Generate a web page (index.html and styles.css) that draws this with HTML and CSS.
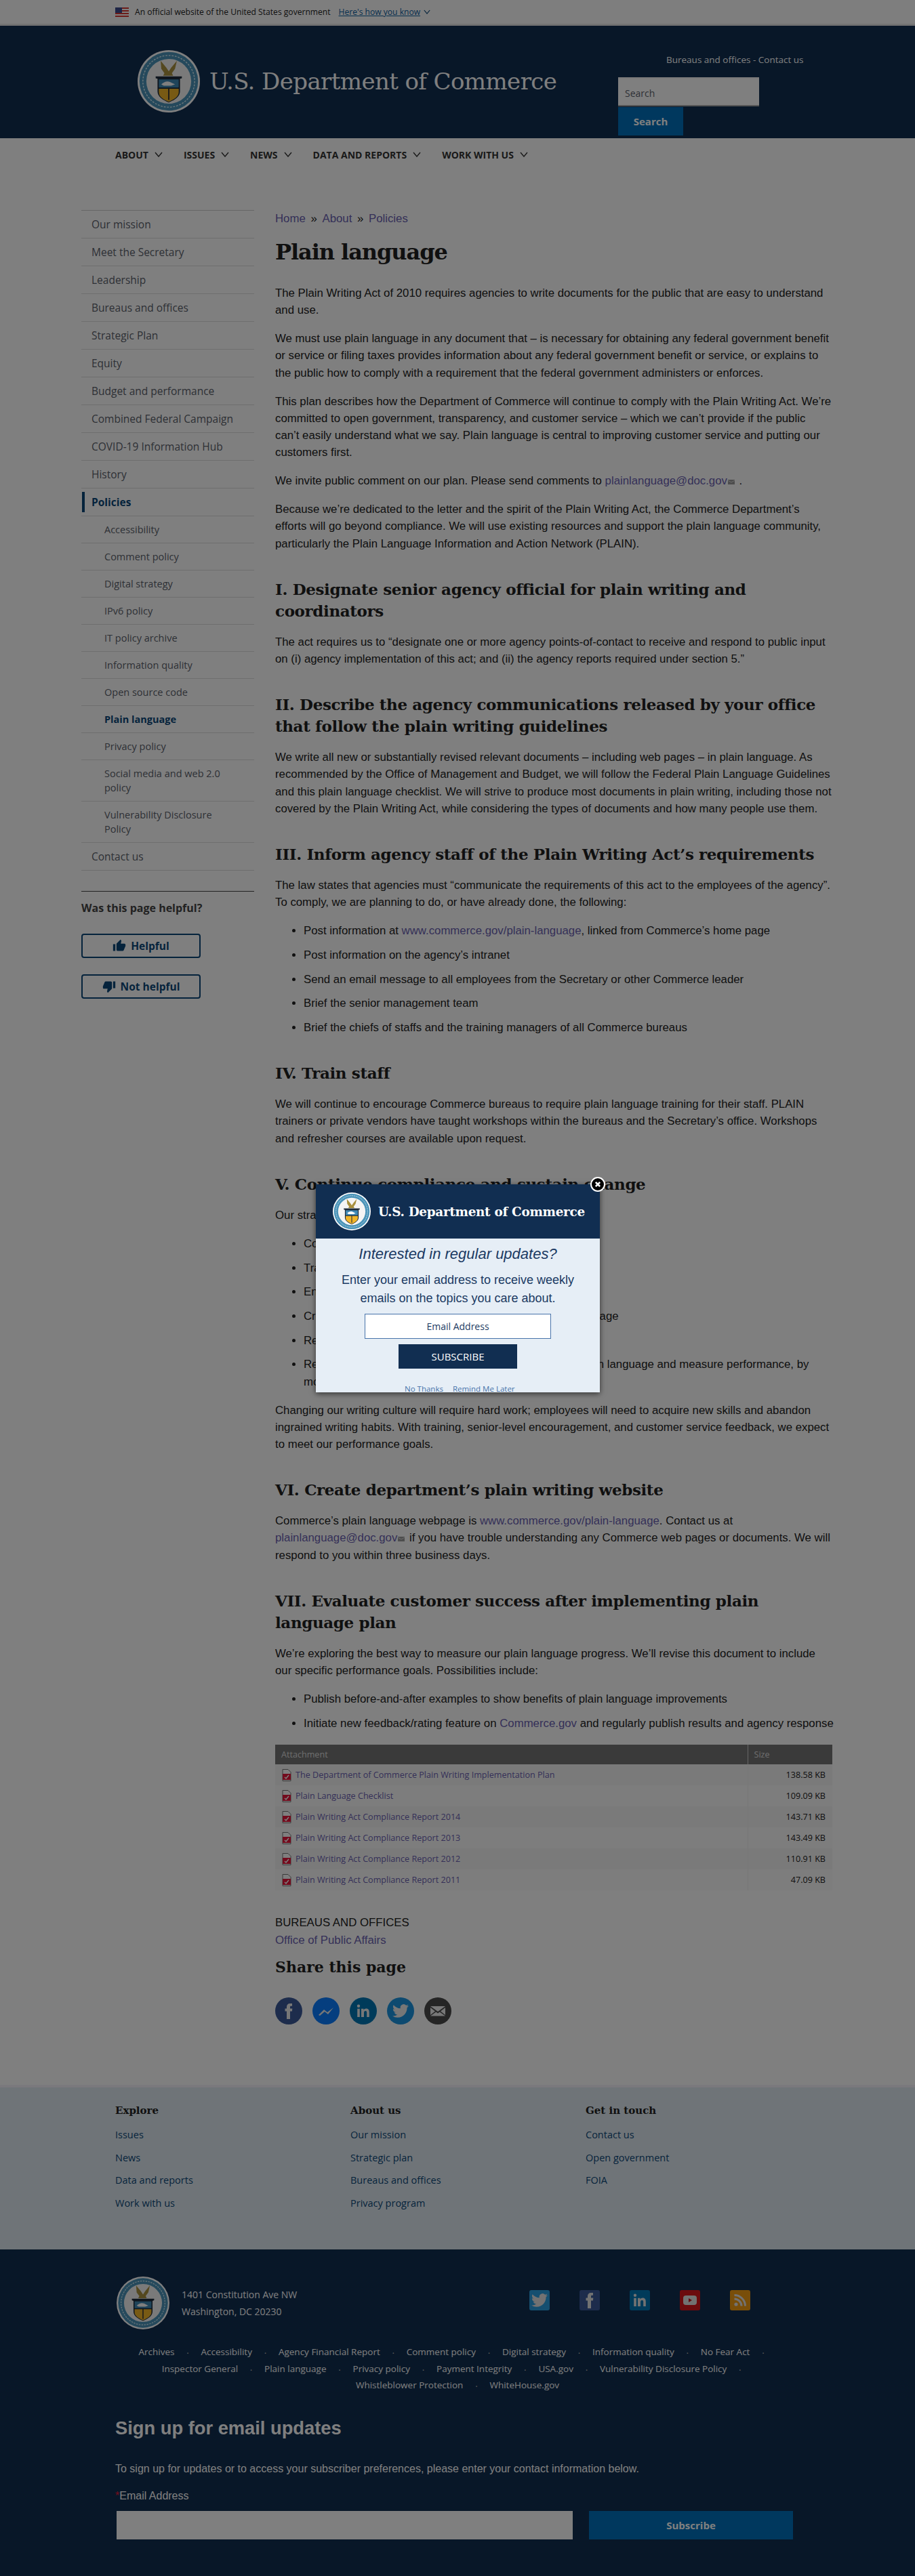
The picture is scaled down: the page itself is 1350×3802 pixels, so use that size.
FILE: index.html
```html
<!DOCTYPE html>
<html>
<head>
	<title>Plain language | U.S. Department of Commerce</title>
	<link rel="stylesheet" href="styles.css">
</head>
<body>
	<svg class="defs" width="0" height="0">
		<symbol id="seal" viewBox="0 0 100 100">
			<circle cx="50" cy="50" r="50" fill="#fff"/>
			<circle cx="50" cy="50" r="47" fill="#4a93b8"/>
			<circle cx="50" cy="50" r="36" fill="#f4f4f4"/>
			<circle cx="50" cy="50" r="41.5" fill="none" stroke="#d9edf5" stroke-width="1.5" stroke-dasharray="3 2"/>
			<path d="M37 17l9 11 4 6 4-6 9-11-3 13-5 7 2 4H41l2-4-5-7z" fill="#a8903f"/>
			<path d="M29 42h42v3l-3 1v20c0 9-9 14-18 18-9-4-18-9-18-18V46l-3-1z" fill="#1d2a3a"/>
			<path d="M34 47h32v13H34z" fill="#3f88b5"/>
			<path d="M38 55c4-4 9-6 14-4l8 4-6 2H42z" fill="#fff"/>
			<path d="M34 62h32v5c0 8-8 12-16 16-8-4-16-8-16-16z" fill="#f0b429"/>
			<path d="M49 60h2v20h-2z" fill="#333"/>
		</symbol>
		<symbol id="chevron" viewBox="0 0 12 8">
			<path d="M1 1l5 6 5-6" fill="none" stroke="currentColor" stroke-width="1.4"/>
		</symbol>
		<symbol id="pdf" viewBox="0 0 14 18">
			<path d="M1 .5h8l4 4v13H1z" fill="#fff" stroke="#777"/>
			<path d="M1 7h12v9H1z" fill="#e6163a"/>
			<path d="M4 12l2 2 4-5" fill="none" stroke="#fff" stroke-width="1.5"/>
		</symbol>
		<symbol id="bird" viewBox="0 0 24 24">
			<path d="M23.95 4.57a10 10 0 0 1-2.82.77 4.96 4.96 0 0 0 2.16-2.72c-.95.55-2 .95-3.12 1.17a4.92 4.92 0 0 0-8.38 4.48C7.69 8.09 4.07 6.13 1.64 3.16a4.82 4.82 0 0 0-.67 2.48c0 1.7.87 3.2 2.19 4.1a4.9 4.9 0 0 1-2.23-.62v.06a4.92 4.92 0 0 0 3.95 4.83 4.9 4.9 0 0 1-2.21.08 4.94 4.94 0 0 0 4.6 3.42A9.87 9.87 0 0 1 0 19.54a13.94 13.94 0 0 0 7.55 2.21c9.05 0 14-7.5 14-13.98 0-.21 0-.42-.02-.63a9.94 9.94 0 0 0 2.46-2.55z" fill="currentColor"/>
		</symbol>
		<symbol id="fb" viewBox="0 0 24 24">
			<path d="M14 8.5V6.3c0-1 .3-1.5 1.6-1.5H17V1h-2.900C10.700 1 9 3 9 6v2.500H6.500v4H9V24h5V12.500h2.900l.4-4z" fill="currentColor"/>
		</symbol>
		<symbol id="in" viewBox="0 0 24 24">
			<path d="M5 2.500a2.200 2.200 0 1 1 0 4.400 2.200 2.200 0 0 1 0-4.400zM3.200 8.800h3.600V21H3.200zM9 8.800h3.400v1.700c.5-.9 1.800-2 3.700-2 3.900 0 4.700 2.600 4.700 5.900V21h-3.600v-5.700c0-1.400 0-3.200-2-3.200s-2.200 1.500-2.200 3.100V21H9z" fill="currentColor"/>
		</symbol>
		<symbol id="thumb" viewBox="0 0 24 24">
			<path d="M1 21h4V9H1v12zm22-11c0-1.100-.9-2-2-2h-6.310l.95-4.570.03-.32c0-.41-.17-.79-.44-1.060L14.170 1 7.590 7.590C7.220 7.950 7 8.450 7 9v10c0 1.100.9 2 2 2h9c.83 0 1.540-.5 1.840-1.220l3.020-7.050c.09-.23.14-.47.14-.73v-2z" fill="currentColor"/>
		</symbol>
		<symbol id="mailmark" viewBox="0 0 10 7">
			<path d="M0 0h10v7H0z" fill="#9a9a9a"/>
			<path d="M0 1l5 3 5-3" fill="none" stroke="#dcdcdc"/>
		</symbol>
	</svg>

	<div class="gov-banner">
		<svg class="flag" viewBox="0 0 20 14" width="20" height="14">
			<path d="M0 0h20v14H0z" fill="#fff"/>
			<path d="M0 0h20v2H0zM0 4h20v2H0zM0 8h20v2H0zM0 12h20v2H0z" fill="#d83933"/>
			<path d="M0 0h10v8H0z" fill="#3c4a8c"/>
		</svg>
		<span>An official website of the United States government</span>
		<a href="#">Here's how you know</a>
		<svg class="chev"><use href="#chevron"/></svg>
	</div>

	<header class="site-header">
		<div class="brand">
			<svg class="brand-seal"><use href="#seal"/></svg>
			<span class="brand-name">U.S. Department of Commerce</span>
		</div>
		<div class="header-right">
			<div class="top-links">Bureaus and offices - Contact us</div>
			<div class="search-box">Search</div>
			<button class="search-btn">Search</button>
		</div>
	</header>

	<nav class="main-nav">
		<a href="#">About <svg><use href="#chevron"/></svg></a>
		<a href="#">Issues <svg><use href="#chevron"/></svg></a>
		<a href="#">News <svg><use href="#chevron"/></svg></a>
		<a href="#">Data and reports <svg><use href="#chevron"/></svg></a>
		<a href="#">Work with us <svg><use href="#chevron"/></svg></a>
	</nav>

	<div class="page">
		<aside class="sidebar">
			<ul class="side-menu">
				<li>Our mission</li>
				<li>Meet the Secretary</li>
				<li>Leadership</li>
				<li>Bureaus and offices</li>
				<li>Strategic Plan</li>
				<li>Equity</li>
				<li>Budget and performance</li>
				<li>Combined Federal Campaign</li>
				<li>COVID-19 Information Hub</li>
				<li>History</li>
				<li class="active">Policies</li>
				<li class="sub">Accessibility</li>
				<li class="sub">Comment policy</li>
				<li class="sub">Digital strategy</li>
				<li class="sub">IPv6 policy</li>
				<li class="sub">IT policy archive</li>
				<li class="sub">Information quality</li>
				<li class="sub">Open source code</li>
				<li class="sub current">Plain language</li>
				<li class="sub">Privacy policy</li>
				<li class="sub">Social media and web 2.0 policy</li>
				<li class="sub">Vulnerability Disclosure Policy</li>
				<li>Contact us</li>
			</ul>
			<div class="helpful">
				<h4>Was this page helpful?</h4>
				<button class="help-btn"><svg><use href="#thumb"/></svg>Helpful</button>
				<button class="help-btn down"><svg><use href="#thumb"/></svg>Not helpful</button>
			</div>
		</aside>

		<main class="content">
			<div class="crumbs"><a href="#">Home</a> » <a href="#">About</a> » <a href="#">Policies</a></div>
			<h1>Plain language</h1>

			<p>The Plain Writing Act of 2010 requires agencies to write documents for the public that are easy to understand and use.</p>
			<p>We must use plain language in any document that – is necessary for obtaining any federal government benefit or service or filing taxes provides information about any federal government benefit or service, or explains to the public how to comply with a requirement that the federal government administers or enforces.</p>
			<p>This plan describes how the Department of Commerce will continue to comply with the Plain Writing Act. We’re committed to open government, transparency, and customer service – which we can’t provide if the public can’t easily understand what we say. Plain language is central to improving customer service and putting our customers first.</p>
			<p>We invite public comment on our plan. Please send comments to <a href="#">plainlanguage@doc.gov</a><svg class="mailmark"><use href="#mailmark"/></svg> .</p>
			<p>Because we’re dedicated to the letter and the spirit of the Plain Writing Act, the Commerce Department’s efforts will go beyond compliance. We will use existing resources and support the plain language community, particularly the Plain Language Information and Action Network (PLAIN).</p>

			<h2>I. Designate senior agency official for plain writing and coordinators</h2>
			<p>The act requires us to “designate one or more agency points-of-contact to receive and respond to public input on (i) agency implementation of this act; and (ii) the agency reports required under section 5.”</p>

			<h2>II. Describe the agency communications released by your office that follow the plain writing guidelines</h2>
			<p>We write all new or substantially revised relevant documents – including web pages – in plain language. As recommended by the Office of Management and Budget, we will follow the Federal Plain Language Guidelines and this plain language checklist. We will strive to produce most documents in plain writing, including those not covered by the Plain Writing Act, while considering the types of documents and how many people use them.</p>

			<h2>III. Inform agency staff of the Plain Writing Act’s requirements</h2>
			<p>The law states that agencies must “communicate the requirements of this act to the employees of the agency”. To comply, we are planning to do, or have already done, the following:</p>
			<ul>
				<li>Post information at <a href="#">www.commerce.gov/plain-language</a>, linked from Commerce’s home page</li>
				<li>Post information on the agency’s intranet</li>
				<li>Send an email message to all employees from the Secretary or other Commerce leader</li>
				<li>Brief the senior management team</li>
				<li>Brief the chiefs of staffs and the training managers of all Commerce bureaus</li>
			</ul>

			<h2>IV. Train staff</h2>
			<p>We will continue to encourage Commerce bureaus to require plain language training for their staff. PLAIN trainers or private vendors have taught workshops within the bureaus and the Secretary’s office. Workshops and refresher courses are available upon request.</p>

			<h2>V. Continue compliance and sustain change</h2>
			<p>Our strategy for sustaining plain writing includes:</p>
			<ul>
				<li>Continue to follow the guidelines</li>
				<li>Train employees on plain writing</li>
				<li>Encourage the use of plain writing</li>
				<li>Create a community of employees who support plain language</li>
				<li>Recognize good writing</li>
				<li>Review documents and web pages to ensure they use plain language and measure performance, by monitoring feedback</li>
			</ul>
			<p>Changing our writing culture will require hard work; employees will need to acquire new skills and abandon ingrained writing habits. With training, senior-level encouragement, and customer service feedback, we expect to meet our performance goals.</p>

			<h2>VI. Create department’s plain writing website</h2>
			<p>Commerce’s plain language webpage is <a href="#">www.commerce.gov/plain-language</a>. Contact us at <a href="#">plainlanguage@doc.gov</a><svg class="mailmark"><use href="#mailmark"/></svg> if you have trouble understanding any Commerce web pages or documents. We will respond to you within three business days.</p>

			<h2>VII. Evaluate customer success after implementing plain language plan</h2>
			<p>We’re exploring the best way to measure our plain language progress. We’ll revise this document to include our specific performance goals. Possibilities include:</p>
			<ul>
				<li>Publish before-and-after examples to show benefits of plain language improvements</li>
				<li>Initiate new feedback/rating feature on <a href="#">Commerce.gov</a> and regularly publish results and agency response</li>
			</ul>

			<table class="files">
				<thead>
					<tr><th>Attachment</th><th>Size</th></tr>
				</thead>
				<tbody>
					<tr><td><svg><use href="#pdf"/></svg><a href="#">The Department of Commerce Plain Writing Implementation Plan</a></td><td>138.58 KB</td></tr>
					<tr><td><svg><use href="#pdf"/></svg><a href="#">Plain Language Checklist</a></td><td>109.09 KB</td></tr>
					<tr><td><svg><use href="#pdf"/></svg><a href="#">Plain Writing Act Compliance Report 2014</a></td><td>143.71 KB</td></tr>
					<tr><td><svg><use href="#pdf"/></svg><a href="#">Plain Writing Act Compliance Report 2013</a></td><td>143.49 KB</td></tr>
					<tr><td><svg><use href="#pdf"/></svg><a href="#">Plain Writing Act Compliance Report 2012</a></td><td>110.91 KB</td></tr>
					<tr><td><svg><use href="#pdf"/></svg><a href="#">Plain Writing Act Compliance Report 2011</a></td><td>47.09 KB</td></tr>
				</tbody>
			</table>

			<div class="bureau-label">BUREAUS AND OFFICES</div>
			<div class="bureau-link"><a href="#">Office of Public Affairs</a></div>

			<h3 class="share-title">Share this page</h3>
			<div class="share">
				<a class="fb" href="#"><svg><use href="#fb"/></svg></a>
				<a class="msg" href="#">
					<svg viewBox="0 0 24 24"><path d="M1 18l8-8 5 4 9-7-8 10-5-4-7 6z" fill="currentColor"/></svg>
				</a>
				<a class="li" href="#"><svg><use href="#in"/></svg></a>
				<a class="tw" href="#"><svg><use href="#bird"/></svg></a>
				<a class="mail" href="#">
					<svg viewBox="0 0 24 24"><path d="M1 5h22L12 13zM1 7l7 5.500L1 18zM23 7v11l-7-5.500zM1 19.500l8.300-6 2.700 2 2.700-2 8.300 6z" fill="currentColor"/></svg>
				</a>
			</div>
		</main>
	</div>

	<footer>
		<div class="foot-top">
			<div class="foot-col">
				<h5>Explore</h5>
				<a href="#">Issues</a>
				<a href="#">News</a>
				<a href="#">Data and reports</a>
				<a href="#">Work with us</a>
			</div>
			<div class="foot-col">
				<h5>About us</h5>
				<a href="#">Our mission</a>
				<a href="#">Strategic plan</a>
				<a href="#">Bureaus and offices</a>
				<a href="#">Privacy program</a>
			</div>
			<div class="foot-col">
				<h5>Get in touch</h5>
				<a href="#">Contact us</a>
				<a href="#">Open government</a>
				<a href="#">FOIA</a>
			</div>
		</div>
		<div class="foot-dark">
			<div class="foot-id">
				<div class="address">
					<svg class="foot-seal"><use href="#seal"/></svg>
					<div>1401 Constitution Ave NW<br>Washington, DC 20230</div>
				</div>
				<div class="socials">
					<a class="tw" href="#"><svg><use href="#bird"/></svg></a>
					<a class="fb" href="#"><svg><use href="#fb"/></svg></a>
					<a class="li" href="#"><svg><use href="#in"/></svg></a>
					<a class="yt" href="#">
						<svg viewBox="0 0 24 24"><rect x="2" y="5" width="20" height="14" rx="4" fill="#e4e4e4"/><path d="M10 9l5 3-5 3z" fill="#c4161c"/></svg>
					</a>
					<a class="rss" href="#">
						<svg viewBox="0 0 24 24"><circle cx="6" cy="18" r="2.600" fill="#e4e4e4"/><path d="M3.500 10a10.500 10.500 0 0 1 10.500 10.500M3.500 4.500a16 16 0 0 1 16 16" fill="none" stroke="#e4e4e4" stroke-width="3"/></svg>
					</a>
				</div>
			</div>
			<ul class="foot-links">
				<li>Archives</li>
				<li>Accessibility</li>
				<li>Agency Financial Report</li>
				<li>Comment policy</li>
				<li>Digital strategy</li>
				<li>Information quality</li>
				<li>No Fear Act</li>
				<li>Inspector General</li>
				<li>Plain language</li>
				<li>Privacy policy</li>
				<li>Payment Integrity</li>
				<li>USA.gov</li>
				<li>Vulnerability Disclosure Policy</li>
				<li>Whistleblower Protection</li>
				<li class="last">WhiteHouse.gov</li>
			</ul>
			<h2 class="signup-title">Sign up for email updates</h2>
			<p class="signup-text">To sign up for updates or to access your subscriber preferences, please enter your contact information below.</p>
			<div class="signup-label"><span>*</span>Email Address</div>
			<div class="signup-form">
				<div class="signup-input"></div>
				<button class="signup-btn">Subscribe</button>
			</div>
		</div>
	</footer>

	<div class="overlay"></div>

	<div class="modal">
		<div class="modal-head">
			<svg class="modal-seal"><use href="#seal"/></svg>
			<span>U.S. Department of Commerce</span>
		</div>
		<div class="modal-body">
			<div class="modal-title">Interested in regular updates?</div>
			<div class="modal-text">Enter your email address to receive weekly emails on the topics you care about.</div>
			<div class="modal-input">Email Address</div>
			<button class="modal-btn">SUBSCRIBE</button>
			<div class="modal-links"><a href="#">No Thanks</a><a href="#">Remind Me Later</a></div>
		</div>
		<div class="modal-close">
			<svg viewBox="0 0 20 20"><path d="M6.500 6.500l7 7M13.500 6.500l-7 7" stroke="#fff" stroke-width="3"/></svg>
		</div>
	</div>
</body>
</html>
```

FILE: styles.css
```css
* {
    box-sizing: border-box;
}

html, body {
    margin: 0;
    padding: 0;
}

body {
    position: relative;
    height: 3802px;
    overflow: hidden;
    background-color: #fff;
    color: #212121;
    font-family: "Liberation Sans", Arial, sans-serif;
}

.defs {
    position: absolute;
}

a {
    color: #6a5fb0;
    text-decoration: none;
}

/* top banner */
.gov-banner {
    display: flex;
    align-items: center;
    height: 38px;
    padding-left: 170px;
    background-color: #fdfdfd;
    border-bottom: 3px solid #e4e4e4;
    font-family: "Open Sans", sans-serif;
    font-size: 12.1px;
    color: #212121;
}

.flag {
    margin-right: 9px;
}

.gov-banner a {
    margin-left: 12px;
    color: #0b5c9c;
    text-decoration: underline;
}

.chev {
    width: 10px;
    height: 7px;
    margin-left: 5px;
    color: #0b4778;
}

/* header */
.site-header {
    display: flex;
    height: 166px;
    background-color: #112e51;
}

.brand {
    display: flex;
    align-items: center;
    width: 912px;
    padding: 0 0 0 203px;
    margin-top: -2px;
}

.brand-seal {
    width: 92px;
    height: 94px;
    margin-right: 14px;
}

.brand-name {
    font-family: "DejaVu Serif", serif;
    font-size: 34px;
    color: #fff;
    letter-spacing: -0.6px;
}

.header-right {
    position: relative;
    padding-top: 76px;
}

.top-links {
    position: absolute;
    top: 41px;
    left: 71px;
    white-space: nowrap;
    font-family: "Open Sans", sans-serif;
    font-size: 13.5px;
    color: #fff;
}

.search-box {
    width: 208px;
    height: 43px;
    padding: 12px 10px;
    background-color: #fff;
    border-top: 2px solid #f4f4f4;
    border-bottom: 2px solid #aaa;
    font-family: "Open Sans", sans-serif;
    font-size: 14px;
    color: #5b616b;
}

.search-btn {
    display: block;
    width: 96px;
    height: 42px;
    margin-top: 1px;
    border: none;
    background-color: #0071bc;
    color: #fff;
    font-family: "Open Sans", sans-serif;
    font-weight: 700;
    font-size: 15px;
}

/* main nav */
.main-nav {
    display: flex;
    height: 72px;
    padding: 14px 0 0 170px;
    gap: 31px;
}

.main-nav a {
    display: flex;
    align-items: center;
    height: 20px;
    font-family: "Open Sans", sans-serif;
    font-weight: 700;
    font-size: 14px;
    text-transform: uppercase;
    color: #333;
}

.main-nav svg {
    width: 12px;
    height: 8px;
    margin-left: 9px;
    color: #333;
}

/* page columns */
.page {
    display: flex;
    height: 2801px;
    padding-left: 120px;
    gap: 31px;
}

.sidebar {
    width: 255px;
    padding-top: 34px;
}

.side-menu {
    margin: 0;
    padding: 0;
    list-style: none;
    border-top: 1px solid #ccc;
    font-family: "Open Sans", sans-serif;
    font-size: 15.5px;
    color: #5b616b;
}

.side-menu li {
    position: relative;
    padding: 10px 15px;
    line-height: 20px;
    border-bottom: 1px solid #ddd;
}

.side-menu li.active {
    font-weight: 700;
    color: #0b4778;
}

.side-menu li.active::before {
    content: "";
    position: absolute;
    left: 1px;
    top: 5px;
    bottom: 5px;
    width: 4px;
    background-color: #0b4778;
}

.side-menu li.sub {
    padding: 9px 30px 9px 34px;
    font-size: 14.5px;
    line-height: 21px;
}

.side-menu li.current {
    font-weight: 700;
    color: #0b4778;
}

.helpful {
    margin-top: 30px;
    border-top: 1px solid #444;
}

.helpful h4 {
    margin: 13px 0 27px;
    font-family: "Open Sans", sans-serif;
    font-size: 16px;
    line-height: 22px;
    color: #444;
}

.help-btn {
    display: flex;
    align-items: center;
    justify-content: center;
    width: 176px;
    height: 36px;
    margin-bottom: 24px;
    padding: 0;
    border: 2px solid #0b4778;
    border-radius: 4px;
    background-color: transparent;
    color: #0b4778;
    font-family: "Open Sans", sans-serif;
    font-weight: 700;
    font-size: 15.5px;
}

.help-btn svg {
    width: 20px;
    height: 20px;
    margin-right: 7px;
}

.help-btn.down svg {
    transform: rotate(180deg);
}

/* main column */
.content {
    width: 822px;
    font-size: 16.8px;
    line-height: 25.2px;
}

.crumbs {
    margin-top: 37px;
    font-size: 16.8px;
    line-height: 20px;
}

.crumbs a {
    margin-right: 3px;
}

.crumbs a + a {
    margin-left: 3px;
}

h1 {
    margin: 16px 0 25px;
    font-family: "DejaVu Serif", serif;
    font-size: 32px;
    line-height: 46px;
    letter-spacing: -1.07px;
    color: #212121;
}

.content p {
    margin: 0 0 16.8px;
}

.mailmark {
    width: 10px;
    height: 7px;
    margin: 0 2px 0 1px;
}

.content h2 {
    margin: 39px 0 17px;
    font-family: "DejaVu Serif", serif;
    font-size: 23px;
    line-height: 32px;
    letter-spacing: -0.37px;
    color: #212121;
}

.content ul {
    margin: 0 -6px 16.8px 0;
    padding-left: 42px;
}

.content li {
    margin-bottom: 10.5px;
    padding-left: 0;
}

.files {
    width: 822px;
    margin-top: 19.5px;
    border-collapse: collapse;
    font-family: "Open Sans", sans-serif;
    font-size: 12.6px;
}

.files th {
    height: 29px;
    padding: 0 9px;
    background-color: #757575;
    color: #ddd;
    font-weight: 400;
    text-align: left;
}

.files th + th {
    width: 125px;
    border-left: 1px solid #ccc;
}

.files td {
    height: 31px;
    padding: 0 10px;
    line-height: 20px;
}

.files td svg {
    width: 14px;
    height: 18px;
    margin-right: 6px;
    vertical-align: -5px;
}

.files td + td {
    text-align: right;
    border-left: 1px solid #eee;
}

.files tbody tr:nth-child(odd) {
    background-color: #f5f5f5;
}

.files tbody tr:nth-child(even) {
    background-color: #fbfbfb;
}

.bureau-label {
    margin-top: 35px;
}

.share-title {
    margin: 12px 0 30px;
    font-family: "DejaVu Serif", serif;
    font-size: 22px;
    line-height: 30px;
    color: #212121;
}

.share {
    display: flex;
    gap: 15px;
}

.share a {
    display: flex;
    align-items: center;
    justify-content: center;
    width: 40px;
    height: 40px;
    border-radius: 50%;
    color: #eee;
}

.share svg {
    width: 24px;
    height: 24px;
}

.share .fb { background-color: #3b5998; }
.share .msg { background-color: #0a7cff; }
.share .li { background-color: #0077b5; }
.share .tw { background-color: #1b95e0; }
.share .mail { background-color: #4a4a4a; }

/* footer */
.foot-top {
    display: flex;
    height: 243px;
    padding: 22px 0 0 170px;
    background-color: #dfe9f0;
    border-top: 4px solid #f5f2fa;
}

.foot-col {
    display: flex;
    flex-direction: column;
    width: 347px;
    font-family: "Open Sans", sans-serif;
    font-size: 14.5px;
}

.foot-col h5 {
    margin: 0 0 14px;
    font-family: "DejaVu Serif", serif;
    font-size: 15px;
    line-height: 24px;
    color: #212121;
}

.foot-col a {
    height: 33.500px;
    line-height: 20px;
    color: #0b4778;
}

.foot-dark {
    height: 482px;
    padding: 39px 170px 0 170px;
    background-color: #112e51;
    color: #fff;
}

.foot-id {
    display: flex;
    height: 79px;
}

.address {
    display: flex;
    align-items: center;
    width: 611px;
    font-family: "Open Sans", sans-serif;
    font-size: 14px;
    line-height: 25px;
}

.foot-seal {
    width: 78px;
    height: 78px;
    margin: 0 18px 0 2px;
}

.socials {
    display: flex;
    gap: 44px;
    padding-top: 21px;
}

.socials a {
    display: flex;
    align-items: center;
    justify-content: center;
    width: 30px;
    height: 30px;
    border-radius: 3px;
    color: #e4e4e4;
}

.socials svg {
    width: 24px;
    height: 24px;
}

.socials .tw { background-color: #2a9fe0; }
.socials .fb { background-color: #3b5998; }
.socials .li { background-color: #0077b5; }
.socials .yt { background-color: #d9161c; }
.socials .rss { background-color: #f39c12; }

.foot-links {
    display: flex;
    flex-wrap: wrap;
    justify-content: center;
    margin: 22px 0 0;
    padding: 0;
    list-style: none;
    font-family: "Open Sans", sans-serif;
    font-size: 13.5px;
    line-height: 22.500px;
}

.foot-links li::after {
    content: "•";
    margin: 0 18px;
    font-size: 8px;
    color: #aaa;
}

.foot-links li.last::after {
    content: none;
}

.signup-title {
    margin: 32px 0 0;
    font-size: 27.3px;
    line-height: 36px;
}

.signup-text {
    margin: 29px 0 0;
    font-size: 16px;
    line-height: 26px;
}

.signup-label {
    margin-top: 15px;
    font-size: 16px;
    line-height: 24px;
}

.signup-label span {
    color: #e31c3d;
}

.signup-form {
    display: flex;
    gap: 24px;
    margin-top: 10px;
}

.signup-input {
    width: 673px;
    height: 42px;
    margin-left: 2px;
    background-color: #fff;
}

.signup-btn {
    width: 301px;
    height: 42px;
    border: none;
    background-color: #0071bc;
    color: #fff;
    font-family: "Open Sans", sans-serif;
    font-weight: 700;
    font-size: 15px;
}

/* dimmed page and popup on top */
.overlay {
    position: absolute;
    top: 0;
    left: 0;
    width: 100%;
    height: 100%;
    background-color: rgba(0, 0, 0, 0.5);
}

.modal {
    position: absolute;
    top: 1748px;
    left: 466px;
    width: 419px;
    height: 307px;
    background-color: #e6eef6;
    box-shadow: 0 2px 8px rgba(0, 0, 0, 0.6);
}

.modal-head {
    display: flex;
    align-items: center;
    height: 80px;
    padding-left: 25px;
    background-color: #112e51;
    color: #fff;
    font-family: "DejaVu Serif", serif;
    font-weight: 700;
    font-size: 18.4px;
    letter-spacing: -0.3px;
}

.modal-seal {
    width: 56px;
    height: 56px;
    margin-right: 11px;
}

.modal-body {
    height: 227px;
    text-align: center;
    color: #1b3a63;
}

.modal-title {
    margin-top: 10px;
    font-style: italic;
    font-size: 22px;
    line-height: 26px;
}

.modal-text {
    width: 370px;
    margin: 12px auto 0;
    font-size: 18px;
    line-height: 27px;
}

.modal-input {
    width: 275px;
    height: 37px;
    margin: 9px auto 0 72px;
    border: 1px solid #4773aa;
    background-color: #fff;
    font-family: "Open Sans", sans-serif;
    font-size: 14px;
    line-height: 35px;
}

.modal-btn {
    display: block;
    width: 175px;
    height: 36px;
    margin: 8px 0 0 122px;
    border: none;
    background-color: #112e51;
    color: #fff;
    font-family: "Open Sans", sans-serif;
    font-size: 15px;
}

.modal-links {
    display: flex;
    gap: 14px;
    margin: 24px 0 0 131px;
    font-family: "Open Sans", sans-serif;
    font-size: 11.5px;
    line-height: 12px;
}

.modal-links a {
    color: #4773aa;
}

.modal-close {
    position: absolute;
    top: -11px;
    right: -8px;
    width: 22px;
    height: 22px;
    border: 2px solid #fff;
    border-radius: 50%;
    background-color: #000;
}

.modal-close svg {
    display: block;
    width: 18px;
    height: 18px;
}
```
